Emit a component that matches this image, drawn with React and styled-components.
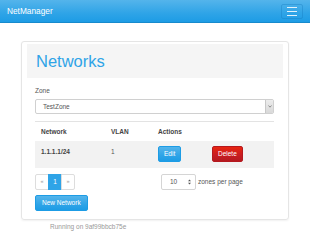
import styled, { createGlobalStyle } from "styled-components";

const GlobalStyle = createGlobalStyle`
  html, body {
    margin: 0;
    padding: 0;
    background: #ffffff;
  }
  body {
    font-family: "Liberation Sans", Arial, Helvetica, sans-serif;
    font-size: 6.5px;
    line-height: 1.43;
    color: #555555;
  }
`;

const Navbar = styled.nav`
  height: 22px;
  display: flex;
  align-items: center;
  justify-content: space-between;
  padding: 0 7px;
  background-image: linear-gradient(#54b4eb, #2fa4e7 60%, #1d9ce5);
  border-bottom: 1px solid #178acc;
`;

const Brand = styled.div`
  color: #ffffff;
  font-size: 8.3px;
  line-height: 1;
`;

const Toggle = styled.div`
  width: 22px;
  height: 15px;
  box-sizing: border-box;
  border: 1px solid rgba(20, 120, 190, 0.35);
  border-radius: 2px;
  display: flex;
  flex-direction: column;
  align-items: center;
  justify-content: center;
  gap: 3px;
`;

const Bar = styled.span`
  display: block;
  width: 10px;
  height: 1px;
  background: rgba(255, 255, 255, 0.85);
`;

const Page = styled.main`
  padding: 18px 21px 0;
`;

const Card = styled.section`
  border: 1px solid #e5e5e5;
  border-radius: 3px;
  box-shadow: 0 1px 2px rgba(0, 0, 0, 0.06);
  padding: 2px 5px 8px;
`;

const Header = styled.div`
  background: #f5f5f5;
  height: 34px;
  display: flex;
  align-items: center;
  padding: 0 9px;
`;

const Title = styled.h1`
  margin: 0;
  font-size: 16.5px;
  font-weight: 400;
  line-height: 1;
  color: #2fa4e7;
`;

const Body = styled.div`
  padding: 8px 9px 0 8px;
`;

const Label = styled.div`
  line-height: 9px;
  margin-bottom: 4px;
  color: #555555;
`;

const SelectBox = styled.div`
  display: flex;
  height: 15px;
  border: 1px solid #d0d0d0;
  border-radius: 2px;
  box-sizing: border-box;
  overflow: hidden;
  background: #ffffff;
`;

const SelectValue = styled.div`
  flex: 1;
  display: flex;
  align-items: center;
  padding-left: 7px;
  color: #555555;
`;

const SelectArrow = styled.div`
  width: 7px;
  background: linear-gradient(#ececec, #d9d9d9);
  border-left: 1px solid #c8c8c8;
  display: flex;
  align-items: center;
  justify-content: center;
`;

const Table = styled.div`
  margin-top: 7px;
  border-top: 1px solid #e3e3e3;
`;

const Row = styled.div`
  display: grid;
  grid-template-columns: 70px 47px 54px 1fr;
  align-items: ${(p) => (p.$head ? "center" : "start")};
  height: ${(p) => (p.$head ? "19px" : "27px")};
  background: ${(p) => (p.$striped ? "#f2f2f2" : "transparent")};
  box-sizing: border-box;
  padding: ${(p) => (p.$head ? "0" : "6px 0 0")};
`;

const Cell = styled.div`
  padding: 0 6px;
  font-weight: ${(p) => (p.$bold ? 700 : 400)};
  line-height: 9px;
  color: ${(p) => (p.$bold ? "#444444" : "#555555")};
`;

const Button = styled.button`
  font-family: inherit;
  font-size: 6.5px;
  line-height: 1;
  height: 16px;
  padding: 0 ${(p) => p.$pad || 5}px;
  border-radius: 2px;
  color: #ffffff;
  cursor: pointer;
  border: 1px solid ${(p) => (p.$variant === "danger" ? "#b5191f" : "#1d9ce5")};
  background-image: ${(p) =>
    p.$variant === "danger"
      ? "linear-gradient(#e72510, #c71c22 60%, #b5191f)"
      : "linear-gradient(#54b4eb, #2fa4e7 60%, #1d9ce5)"};
  margin-top: -1px;
`;

const Footer = styled.div`
  display: grid;
  grid-template-columns: 126px 1fr;
  margin-top: 6px;
  align-items: center;
`;

const Pagination = styled.div`
  display: flex;
`;

const PageItem = styled.div`
  width: 14px;
  height: 16px;
  box-sizing: border-box;
  display: flex;
  align-items: center;
  justify-content: center;
  border: 1px solid ${(p) => (p.$active ? "#2fa4e7" : "#dddddd")};
  margin-left: -1px;
  background: ${(p) => (p.$active ? "#2fa4e7" : "#ffffff")};
  color: ${(p) => (p.$active ? "#ffffff" : "#999999")};
  font-size: ${(p) => (p.$active ? "6.5px" : "5.5px")};
  &:first-child {
    margin-left: 0;
    border-radius: 2px 0 0 2px;
  }
  &:last-child {
    border-radius: 0 2px 2px 0;
  }
`;

const PerPage = styled.div`
  display: flex;
  align-items: center;
  gap: 2px;
`;

const SmallSelect = styled.div`
  width: 35px;
  height: 16px;
  box-sizing: border-box;
  border: 1px solid #d5d5d5;
  border-radius: 2px;
  display: flex;
  align-items: center;
  justify-content: space-between;
  padding: 0 4px 0 8px;
  color: #555555;
`;

const Actions = styled.div`
  margin-top: 6px;
`;

const Running = styled.div`
  padding: 2px 0 0 29px;
  color: #999999;
  line-height: 9px;
`;

export default function App() {
  return (
    <>
      <GlobalStyle />
      <Navbar>
        <Brand>NetManager</Brand>
        <Toggle>
          <Bar />
          <Bar />
          <Bar />
        </Toggle>
      </Navbar>
      <Page>
        <Card>
          <Header>
            <Title>Networks</Title>
          </Header>
          <Body>
            <Label>Zone</Label>
            <SelectBox>
              <SelectValue>TestZone</SelectValue>
              <SelectArrow>
                <svg width="4" height="3" viewBox="0 0 4 3">
                  <path d="M0.5 0.5 L2 2.2 L3.5 0.5" fill="none" stroke="#777" strokeWidth="0.8" />
                </svg>
              </SelectArrow>
            </SelectBox>
            <Table>
              <Row $head>
                <Cell $bold>Network</Cell>
                <Cell $bold>VLAN</Cell>
                <Cell $bold>Actions</Cell>
                <Cell />
              </Row>
              <Row $striped>
                <Cell $bold>1.1.1.1/24</Cell>
                <Cell>1</Cell>
                <Cell>
                  <Button $pad={5}>Edit</Button>
                </Cell>
                <Cell>
                  <Button $variant="danger" $pad={5}>Delete</Button>
                </Cell>
              </Row>
            </Table>
            <Footer>
              <Pagination>
                <PageItem>«</PageItem>
                <PageItem $active>1</PageItem>
                <PageItem>»</PageItem>
              </Pagination>
              <PerPage>
                <SmallSelect>
                  <span>10</span>
                  <svg width="3" height="6" viewBox="0 0 3 6">
                    <path d="M0 2.3 L1.5 0.5 L3 2.3 Z M0 3.7 L1.5 5.5 L3 3.7 Z" fill="#555" />
                  </svg>
                </SmallSelect>
                <span>zones per page</span>
              </PerPage>
            </Footer>
            <Actions>
              <Button $pad={6}>New Network</Button>
            </Actions>
          </Body>
        </Card>
        <Running>Running on 9af99bbcb75e</Running>
      </Page>
    </>
  );
}
